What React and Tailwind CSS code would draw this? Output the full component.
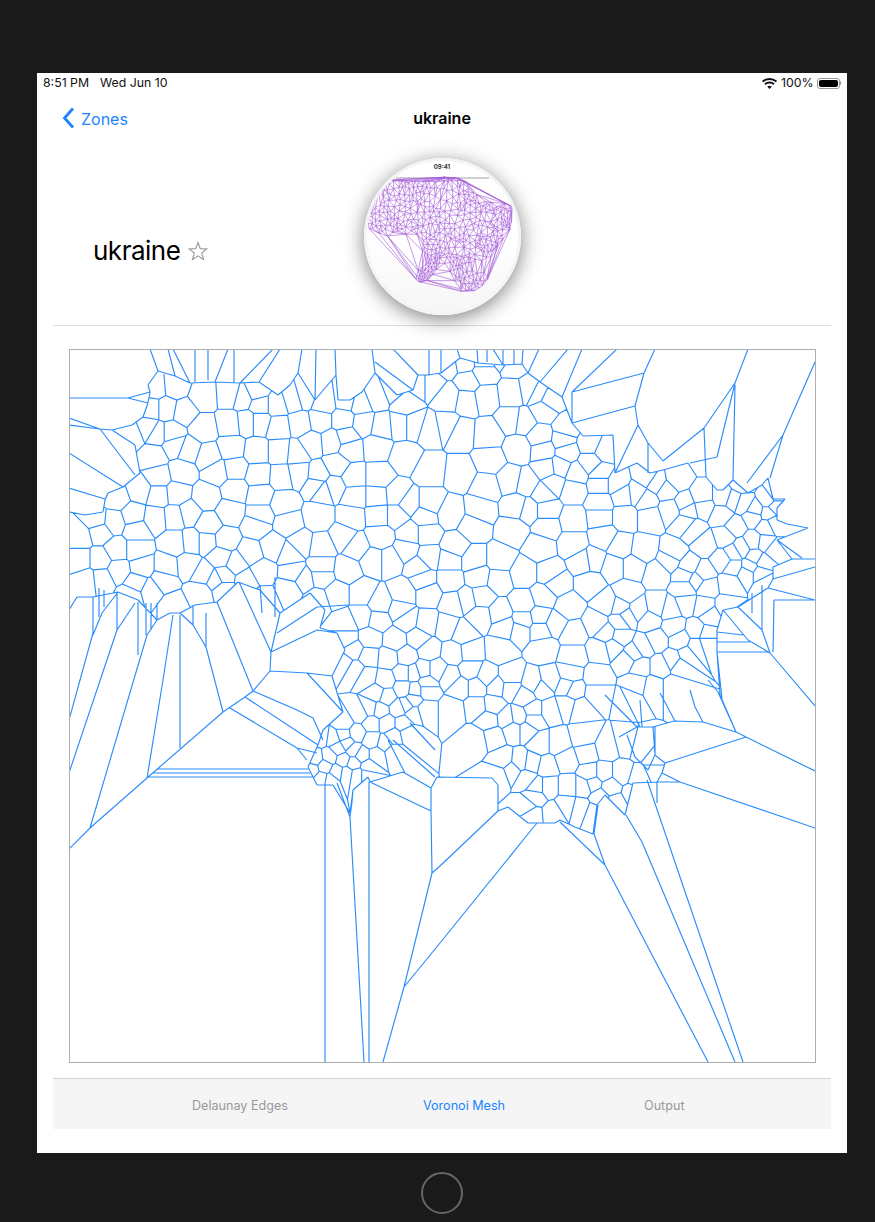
import { useMemo } from "react";

// cell centres read off the reference, in 3x crop coords, per crop
const crops = [
  {
    x: 60,
    y: 340,
    pts: [
      [285,145],[345,140],[318,205],[275,205],[372,215],[430,170],[510,165],[548,175],[590,155],[600,195],[650,195],[700,180],[735,170],[790,190],[860,180],[900,190],[950,170],[1000,150],[1035,190],[1115,130],[1075,130],
      [430,265],[510,250],[560,245],[600,245],[655,260],[720,250],[780,240],[850,240],[910,250],[965,260],[1020,255],[1060,255],[1110,270],[335,280],[265,265],[215,285],[290,280],
      [445,350],[515,325],[590,335],[660,335],[710,340],[755,310],[815,305],[860,290],[870,325],[950,320],[1035,350],[1110,390],[345,315],[385,330],[280,350],
      [295,410],[365,395],[525,385],[595,405],[665,410],[715,400],[775,405],[830,375],[880,410],[955,410],[470,395],[240,450],[170,475],
      [295,465],[350,460],[440,470],[525,450],[600,465],[670,490],[770,435],[790,450],[820,440],[885,470],[950,470],[1010,465],[1045,490],[1110,490],
      [220,525],[160,545],[285,535],[345,530],[445,555],[385,520],[510,515],[600,525],[590,555],[685,550],[775,530],[875,530],[955,525],[1010,525],[1095,530],
      [120,575],[110,540],[60,590],[170,630],[230,570],[345,610],[395,605],[440,605],[495,600],[570,640],[640,620],[720,610],[785,620],[850,590],[960,590],[890,620],[1050,580],[1100,580],[230,630],
      [60,660],[120,660],[80,720],[125,715],[175,690],[245,680],[320,680],[385,675],[430,700],[480,650],[530,670],[490,710],[605,695],[700,700],[690,640],[785,680],[860,690],[940,660],[990,660],[1040,630],[1075,680],[1105,650],
      [230,730],[215,765],[270,750],[340,800],[420,760],[310,720],[490,745],[470,720],[560,720],[610,780],[690,745],[730,720],[785,710],[830,760],[905,760],[770,780],[960,790],[1030,760],[1020,810],[1090,720],[1105,760],[1040,840],[1100,850],
      [905,830],[955,840],[1005,900],[860,850],[930,895],[860,895],[1075,895],[1105,930],[1040,950],[985,955],[880,930],[925,950],[850,970],[1060,1000],[1030,1000],[1090,990],[1130,990],[975,1020],[1030,1045],[1065,1050],[1100,1030],[950,1060],[920,1010],[885,990],
    ],
  },
  {
    x: 440,
    y: 340,
    pts: [
      [20,75],[75,65],[130,60],[85,125],[25,170],[135,170],[80,180],[215,160],[130,100],[290,160],[220,70],[190,50],[100,40],[35,30],[270,150],[330,180],[310,210],
      [145,285],[215,240],[250,245],[60,280],[300,290],[20,260],[150,360],[235,325],[60,400],[310,330],[370,300],[380,335],[380,265],[450,310],[495,330],
      [140,440],[210,420],[260,430],[320,385],[360,380],[410,400],[340,430],[450,370],[480,400],[120,510],[30,520],[230,500],[310,460],[400,450],[480,430],[530,430],[480,490],[320,510],[265,510],
      [100,560],[220,570],[320,560],[400,540],[480,530],[555,530],[620,480],[590,460],[550,465],[630,530],[690,510],[735,550],[745,510],[790,500],[735,490],[680,450],[650,430],[620,410],[710,420],
      [880,480],[850,470],[785,470],[905,430],[910,490],[845,525],[940,530],[1005,500],[985,520],[985,480],[1005,465],[945,510],[980,560],[1000,550],[975,610],[1000,630],[940,605],[885,560],[855,590],[905,625],[880,640],[850,660],[945,650],[970,665],[960,700],[930,680],[975,730],[795,610],[700,640],[760,570],[610,630],[540,620],[490,590],[430,665],[460,660],[400,610],[300,620],[180,660],[100,660],[45,620],[30,660],
      [30,720],[115,710],[175,720],[125,770],[80,780],[40,790],[250,700],[330,700],[350,730],[450,730],[520,680],[580,680],[650,700],[690,660],[560,760],[500,790],[385,800],[310,770],[250,790],[180,820],[120,830],[70,880],[20,860],[250,840],[195,860],[300,830],[300,870],[345,850],[400,880],[470,850],[540,800],[540,845],[500,880],[560,830],[595,810],[650,800],[630,840],[690,810],[740,790],[790,800],[800,740],[770,720],[735,705],[735,745],[790,700],[745,680],[870,730],[920,700],[880,680],[860,800],[880,830],[810,830],[770,870],[700,860],[650,900],[720,900],[800,880],[770,920],[800,910],[740,945],[700,960],[610,920],[580,940],[540,890],[520,920],[560,960],[480,930],[400,950],[310,925],[240,870],[180,930],[90,935],[40,940],[90,990],[140,1010],[30,1010],[60,1040],[110,1040],[170,1040],[210,1010],[280,1030],[330,1020],[390,1000],[470,1010],[400,1050],[590,1030],[640,1040],[700,1040],[600,980],[660,980],[720,975],
    ],
  },
  {
    x: 60,
    y: 680,
    pts: [
      [980,50],[1060,60],[890,160],[935,130],[980,130],[960,90],[1015,85],[1095,90],[1100,30],[850,130],[850,165],[900,100],[930,85],[1040,75],[1060,100],[1030,130],[1000,170],[1045,160],[935,180],[880,210],[835,205],[860,190],[820,175],[785,170],[810,230],[795,260],[765,235],[755,270],[785,295],[850,240],[830,275],[810,300],[860,280],[880,250],[925,260],[890,285],[920,285],[975,190],[950,225],[905,225],[1000,215],
    ],
  },
  {
    x: 440,
    y: 680,
    pts: [
      [95,20],[165,20],[210,25],[255,50],[305,25],[380,20],[470,40],[570,60],[35,90],[110,80],[160,75],[145,120],[200,115],[235,110],[280,90],[330,90],[380,75],[420,85],[280,120],[220,150],[160,170],[110,180],[260,150],[300,190],[355,190],[430,170],[440,220],[500,205],[560,190],[600,200],
      [190,240],[240,245],[275,250],[320,260],[380,240],[450,280],[490,280],[545,280],[595,295],[650,240],[650,270],[175,285],[215,270],[260,295],[325,320],[385,320],[430,320],[510,320],[460,310],[480,350],[525,370],[580,340],[290,320],[285,350],[340,400],[380,375],[420,385],[460,400],[275,405],[260,380],
    ],
  },
];

// outline of the dense part of the mesh
const region = [
  [69,512],[69,610],[77,597],[93,597],[118,592],[138,600],[157,620],[170,613],[180,613],[195,605],[217,602],[238,582],[260,590],[280,613],[310,593],[325,610],[320,628],[337,633],[345,650],[332,676],[343,712],[323,730],[318,745],[308,767],[317,785],[333,785],[350,813],[353,790],[368,777],[370,782],[403,772],[431,788],[437,777],[492,778],[498,785],[498,811],[508,807],[528,823],[538,823],[555,823],[560,820],[575,827],[593,834],[597,805],[605,795],[625,815],[633,783],[657,782],[662,773],[665,763],[655,755],[653,727],[674,721],[703,722],[736,732],[720,695],[717,652],[717,630],[723,610],[738,607],[768,588],[773,579],[773,567],[792,559],[777,540],[808,528],[787,524],[777,520],[777,508],[785,499],[773,499],[768,478],[762,485],[748,493],[733,480],[723,490],[717,490],[706,477],[697,477],[688,463],[663,470],[650,473],[637,463],[615,473],[613,435],[583,436],[572,423],[562,397],[540,382],[528,373],[522,364],[503,365],[478,363],[460,358],[441,373],[428,375],[418,375],[413,390],[397,395],[375,373],[362,392],[350,400],[338,400],[336,375],[315,400],[298,373],[290,385],[278,395],[259,382],[240,383],[215,382],[190,383],[175,376],[158,371],[148,385],[150,392],[148,403],[143,417],[132,425],[112,430],[135,445],[140,473],[123,487],[108,493],[105,500],[103,512],[85,515],
];

// long lines that run out of the dense part, traced from the reference
const spokes = [
  [[69,849],[90,828],[147,778],[223,712],[245,697],[253,691],[270,671]],
  [[69,720],[93,633]],[[69,773],[117,630]],[[90,828],[147,635]],[[147,778],[163,680],[173,615]],[[180,615],[180,748]],
  [[206,647],[223,712]],[[217,602],[253,691]],[[270,671],[271,652],[239,582]],[[270,671],[307,673],[332,676]],[[307,673],[343,712]],
  [[253,691],[297,710],[313,718],[323,740]],[[245,697],[318,745]],[[230,708],[297,748],[317,753]],[[297,748],[307,760]],
  [[158,769],[308,769]],[[153,773],[310,773]],[[147,777],[313,777]],
  [[325,784],[325,1062]],[[369,782],[369,1062]],[[350,817],[364,1062]],[[404,987],[383,1062]],[[404,987],[432,873],[431,811]],[[404,987],[440,943],[528,834],[537,823]],[[432,873],[440,866],[498,811]],
  [[370,782],[431,811],[431,788]],[[337,783],[350,817],[352,802],[353,790]],[[388,740],[405,773]],[[393,740],[435,777]],[[410,723],[435,750]],
  [[560,822],[605,865],[708,1062]],[[594,834],[605,865]],[[626,815],[642,842],[735,1062]],[[647,780],[743,1062]],[[657,782],[657,803]],[[594,834],[598,805]],
  [[662,773],[680,782],[815,828]],[[680,782],[657,782]],[[665,763],[746,737],[815,771]],[[746,737],[736,732]],
  [[655,727],[655,755],[648,770]],[[637,727],[655,727]],[[619,737],[637,727]],[[627,735],[635,757],[648,770]],
  [[770,653],[815,706]],[[736,732],[718,692],[708,680]],[[703,722],[695,707],[690,690]],[[717,652],[722,699]],
  [[768,588],[815,600]],[[774,600],[815,600]],[[774,600],[773,652]],[[773,579],[815,567]],[[792,559],[815,559]],[[777,540],[802,558]],
  [[815,362],[783,435],[747,483]],[[783,435],[770,478]],[[748,349],[735,383],[704,428],[663,461]],[[735,385],[733,480]],[[735,383],[717,457],[690,463]],
  [[655,349],[644,373],[635,406],[638,425],[648,443],[663,461]],[[644,373],[572,392]],[[617,349],[572,392]],[[582,349],[562,397]],[[568,349],[540,382]],[[539,349],[528,373]],
  [[635,406],[583,420],[572,423]],[[572,392],[572,423]],[[638,425],[615,473]],[[648,443],[648,473]],[[704,428],[706,477]],
  [[762,585],[762,630]],[[738,607],[762,630],[770,653]],[[723,610],[748,640],[770,653]],[[717,632],[743,635]],[[717,642],[750,642]],[[717,652],[770,652]],[[752,593],[752,613]],
  [[69,398],[128,398],[150,392]],[[128,398],[148,403]],[[69,418],[100,429],[112,430]],[[100,429],[135,475]],[[69,425],[100,429]],[[69,453],[123,487]],[[69,488],[105,499]],
  [[150,349],[158,371]],[[168,349],[175,376]],[[173,349],[190,383]],[[195,349],[195,382]],[[208,349],[208,380]],[[228,349],[215,382]],[[234,349],[234,383]],[[273,349],[240,383]],[[280,349],[259,382]],
  [[302,349],[298,373]],[[316,349],[315,400]],[[335,349],[336,375]],[[372,349],[375,373]],[[375,362],[413,390]],[[393,349],[418,375]],[[429,349],[429,375]],
  [[441,349],[441,373]],[[457,349],[460,358]],[[477,349],[478,363]],[[487,349],[487,362]],[[493,349],[503,365]],[[503,349],[503,365]],[[514,349],[514,364]],[[523,349],[522,364]],
  [[93,597],[93,635]],[[99,588],[99,617]],[[104,590],[104,607]],[[117,592],[117,630]],[[117,630],[135,603]],[[93,635],[102,613],[118,592]],
  [[138,602],[138,655]],[[146,603],[146,635]],[[151,603],[151,630]],[[157,603],[157,620]],[[147,635],[157,620]],
  [[193,605],[193,625]],[[180,613],[193,625],[206,647]],[[206,613],[206,647]],[[260,585],[262,613]],[[275,577],[275,617]],
  [[280,613],[271,652]],[[271,652],[317,630],[337,633]],[[277,633],[317,607],[348,605]],[[605,695],[637,727]],[[620,687],[640,727]],[[640,700],[642,727]],[[660,693],[675,721]],
];

const seeds = [];
crops.forEach((crop) => {
  crop.pts.forEach(([x, y]) => {
    const p = [crop.x + x / 3, crop.y + y / 3];
    if (!seeds.some((s) => Math.hypot(s[0] - p[0], s[1] - p[1]) < 6)) seeds.push(p);
  });
});

const FAR = 20000;

const cellOf = (i) => {
  const [sx, sy] = seeds[i];
  let poly = [
    { x: -FAR, y: -FAR, n: -1 },
    { x: FAR, y: -FAR, n: -1 },
    { x: FAR, y: FAR, n: -1 },
    { x: -FAR, y: FAR, n: -1 },
  ];
  seeds.forEach(([ox, oy], j) => {
    if (j === i) return;
    const nx = ox - sx;
    const ny = oy - sy;
    const c = (nx * (ox + sx)) / 2 + (ny * (oy + sy)) / 2;
    const side = (p) => nx * p.x + ny * p.y - c;
    const out = [];
    poly.forEach((a, k) => {
      const b = poly[(k + 1) % poly.length];
      const da = side(a);
      const db = side(b);
      const cross = () => {
        const t = da / (da - db);
        return { x: a.x + (b.x - a.x) * t, y: a.y + (b.y - a.y) * t };
      };
      if (da <= 0) out.push(a);
      if (da <= 0 && db > 0) out.push({ ...cross(), n: j });
      if (da > 0 && db <= 0) out.push({ ...cross(), n: a.n });
    });
    poly = out;
  });
  return poly;
};

const inside = (x, y) => {
  let hit = false;
  region.forEach((a, k) => {
    const b = region[(k + 1) % region.length];
    if (a[1] > y !== b[1] > y && x < a[0] + ((y - a[1]) / (b[1] - a[1])) * (b[0] - a[0])) hit = !hit;
  });
  return hit;
};

// keep the parts of a segment that lie in the region
const clipToRegion = (a, b) => {
  const ts = [0, 1];
  const dx = b.x - a.x;
  const dy = b.y - a.y;
  region.forEach((p, k) => {
    const q = region[(k + 1) % region.length];
    const ex = q[0] - p[0];
    const ey = q[1] - p[1];
    const den = dx * ey - dy * ex;
    if (Math.abs(den) < 1e-9) return;
    const t = ((p[0] - a.x) * ey - (p[1] - a.y) * ex) / den;
    const u = ((p[0] - a.x) * dy - (p[1] - a.y) * dx) / den;
    if (t > 0 && t < 1 && u >= 0 && u <= 1) ts.push(t);
  });
  ts.sort((m, n) => m - n);
  let d = "";
  for (let k = 0; k < ts.length - 1; k++) {
    const m = (ts[k] + ts[k + 1]) / 2;
    if (inside(a.x + dx * m, a.y + dy * m)) {
      d += `M${(a.x + dx * ts[k]).toFixed(1)} ${(a.y + dy * ts[k]).toFixed(1)}L${(a.x + dx * ts[k + 1]).toFixed(1)} ${(a.y + dy * ts[k + 1]).toFixed(1)}`;
    }
  }
  return d;
};

const buildMesh = () => {
  let voronoi = "";
  let delaunay = "";
  // thumbnail squeezes the top rows so its upper edge stays flat
  const tx = (x) => 3 + (x - 75) * 0.207;
  const ty = (y) => 20 + ((y < 400 ? 400 - (400 - y) * 0.3 : y) - 388) * 0.265;
  seeds.forEach((s, i) => {
    const cell = cellOf(i);
    cell.forEach((a, k) => {
      if (a.n <= i) return;
      voronoi += clipToRegion(a, cell[(k + 1) % cell.length]);
      const o = seeds[a.n];
      delaunay += `M${tx(s[0]).toFixed(1)} ${ty(s[1]).toFixed(1)}L${tx(o[0]).toFixed(1)} ${ty(o[1]).toFixed(1)}`;
    });
  });
  region.forEach((p, k) => {
    const q = region[(k + 1) % region.length];
    voronoi += `M${p[0]} ${p[1]}L${q[0]} ${q[1]}`;
  });
  spokes.forEach((line) => {
    voronoi += "M" + line.map((p) => p.join(" ")).join("L");
  });
  return { voronoi, delaunay };
};

const App = () => {
  const { voronoi, delaunay } = useMemo(buildMesh, []);

  return (
    <div className="w-[875px] h-[1222px] bg-[#1a1a1a] pt-[73px] pl-[37px] font-['Inter','Liberation_Sans',sans-serif]">
      <div className="w-[810px] h-[1080px] bg-white flex flex-col">
        {/* status bar */}
        <div className="h-[20px] flex items-center px-[6px] text-[12.3px] text-[#111]">
          <span>8:51 PM</span>
          <span className="ml-[11px]">Wed Jun 10</span>
          <svg className="ml-auto" width="15" height="11" viewBox="0 0 15 11">
            <path d="M0.6 3.6C4.4 0.1 10.6 0.1 14.4 3.6" fill="none" stroke="#111" strokeWidth="1.9" />
            <path d="M3 6.2C5.4 4 9.6 4 12 6.2" fill="none" stroke="#111" strokeWidth="1.9" />
            <path d="M5.2 8.5L7.5 11L9.8 8.5C8.4 7.4 6.6 7.4 5.2 8.5Z" fill="#111" />
          </svg>
          <span className="ml-[4px]">100%</span>
          <div className="ml-[3px] w-[23px] h-[11px] rounded-[3px] border border-[#999] p-[1px]">
            <div className="w-full h-full rounded-[2px] bg-black" />
          </div>
          <div className="w-[1.5px] h-[4px] bg-[#999] rounded-r-sm" />
        </div>

        {/* nav bar */}
        <div className="h-[50px] grid grid-cols-3 items-center">
          <div className="flex items-center pl-[25px] text-[#1c84ff]">
            <svg width="13" height="22" viewBox="0 0 13 22">
              <path d="M11 1.5L2.5 11L11 20.5" fill="none" stroke="#1c84ff" strokeWidth="2.8" />
            </svg>
            <span className="ml-[6px] text-[16px] leading-[22px] pt-[2px]">Zones</span>
          </div>
          <div className="text-center text-[16px] font-semibold text-black">ukraine</div>
        </div>

        {/* zone header */}
        <div className="h-[182px] mx-[16px] border-b border-[#dedede] box-content grid grid-cols-[1fr_157px_1fr]">
          <div className="flex items-center pl-[40px] pt-[34px]">
            <span className="text-[26px] leading-none tracking-[-0.5px] text-black">ukraine</span>
            <svg className="ml-[8px]" width="20" height="20" viewBox="0 0 20 20">
              <path d="M10 1.5L12.3 7.6L18.9 7.9L13.7 12L15.5 18.4L10 14.8L4.5 18.4L6.3 12L1.1 7.9L7.7 7.6Z" fill="none" stroke="#999" strokeWidth="1.1" />
            </svg>
          </div>
          <div className="relative mt-[15px] w-[157px] h-[157px] rounded-full overflow-hidden bg-gradient-to-b from-white via-white to-[#f6f6f6] border-[3px] border-[#f4f4f4] shadow-[0_4px_20px_rgba(0,0,0,0.5)]">
            <svg className="absolute -left-[3px] -top-[3px] blur-[0.25px]" width="157" height="157" viewBox="0 0 157 157">
              <rect x="32" y="19" width="93" height="2" fill="#d0d0d0" />
              <path d={delaunay} fill="none" stroke="#a257d6" strokeWidth="0.6" />
            </svg>
            <div className="absolute top-[1px] inset-x-0 text-center text-[6px] font-bold text-[#333]">09:41</div>
          </div>
        </div>

        {/* mesh */}
        <div className="mt-[23px] ml-[32px] w-[747px] h-[714px] border border-[#aeaeae]">
          <svg className="block" width="745" height="712" viewBox="70 350 745 712">
            <path d={voronoi} fill="none" stroke="#2a8cfc" strokeWidth="1.15" strokeLinejoin="round" />
          </svg>
        </div>

        {/* tabs */}
        <div className="mt-[15px] mx-[16px] h-[51px] bg-[#f5f5f5] border-t border-[#d2d2d2] flex items-center pl-[139px] pt-[4px] text-[12.6px]">
          <span className="text-[#999]">Delaunay Edges</span>
          <span className="ml-[135px] text-[#1c84ff]">Voronoi Mesh</span>
          <span className="ml-[139px] text-[#999]">Output</span>
        </div>
      </div>

      {/* home button */}
      <div className="mt-[19px] ml-[384px] w-[42px] h-[42px] rounded-full border-2 border-[#666]" />
    </div>
  );
};

export default App;
